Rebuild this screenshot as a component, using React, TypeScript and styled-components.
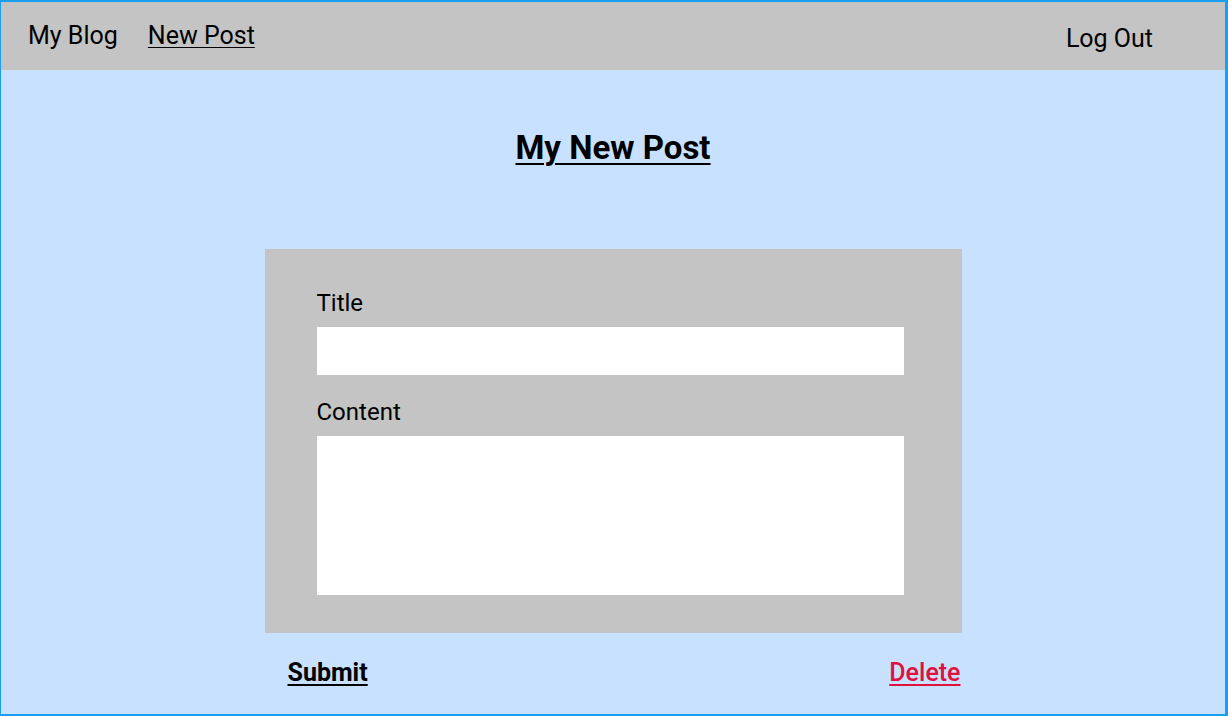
import React from "react";
import styled, { createGlobalStyle } from "styled-components";

const Global = createGlobalStyle`
  html, body { margin: 0; padding: 0; }
  body { font-family: Roboto, "Liberation Sans", sans-serif; }
  * { box-sizing: border-box; }
`;

const Frame = styled.div`
  width: 1228px;
  height: 716px;
  border: 2px solid #1a9ff0;
  border-left-width: 1px;
  border-right-width: 3px;
  background: #c8e1fe;
  display: flex;
  flex-direction: column;
  overflow: hidden;
`;

const Header = styled.header`
  height: 68px;
  background: #c4c4c4;
  display: flex;
  align-items: flex-start;
  padding: 0 72px 0 27px;
`;

const NavGroup = styled.nav`
  display: flex;
  gap: 30px;
  padding-top: 20px;
`;

const NavItem = styled.a<{ $underline?: boolean }>`
  font-size: 25px;
  line-height: 28px;
  color: #000;
  text-decoration: ${(p) => (p.$underline ? "underline" : "none")};
  text-underline-offset: 3px;
  text-decoration-thickness: 1px;
`;

const LogOut = styled.a`
  margin-left: auto;
  padding-top: 23px;
  font-size: 25px;
  line-height: 28px;
  color: #000;
`;

const Main = styled.main`
  display: flex;
  flex-direction: column;
  align-items: center;
`;

const PageTitle = styled.h1`
  margin: 59px 0 0;
  font-size: 33px;
  line-height: 38px;
  font-weight: 700;
  text-decoration: underline;
  text-decoration-thickness: 2px;
  text-underline-offset: 4px;
`;

const Card = styled.form`
  margin-top: 82px;
  width: 697px;
  height: 384px;
  background: #c4c4c4;
  padding: 40px 58px 0 52px;
  display: flex;
  flex-direction: column;
`;

const Label = styled.label`
  font-size: 24px;
  line-height: 28px;
  color: #000;
  margin-bottom: 10px;
`;

const Field = styled.div<{ $h: number; $mb?: number }>`
  width: 587px;
  height: ${(p) => p.$h}px;
  background: #fff;
  margin-bottom: ${(p) => p.$mb ?? 0}px;
`;

const Actions = styled.div`
  width: 697px;
  display: flex;
  justify-content: space-between;
  padding: 26px 1px 0 23px;
`;

const ActionLink = styled.a<{ $danger?: boolean }>`
  font-size: 25px;
  line-height: 28px;
  font-weight: ${(p) => (p.$danger ? 500 : 700)};
  color: ${(p) => (p.$danger ? "#e0103f" : "#000")};
  text-decoration: underline;
  text-underline-offset: 3px;
  text-decoration-thickness: 2px;
`;

export default function App() {
  return (
    <>
      <Global />
      <Frame>
        <Header>
          <NavGroup>
            <NavItem>My Blog</NavItem>
            <NavItem $underline>New Post</NavItem>
          </NavGroup>
          <LogOut>Log Out</LogOut>
        </Header>
        <Main>
          <PageTitle>My New Post</PageTitle>
          <Card>
            <Label>Title</Label>
            <Field $h={48} $mb={23} />
            <Label>Content</Label>
            <Field $h={159} />
          </Card>
          <Actions>
            <ActionLink>Submit</ActionLink>
            <ActionLink $danger>Delete</ActionLink>
          </Actions>
        </Main>
      </Frame>
    </>
  );
}
